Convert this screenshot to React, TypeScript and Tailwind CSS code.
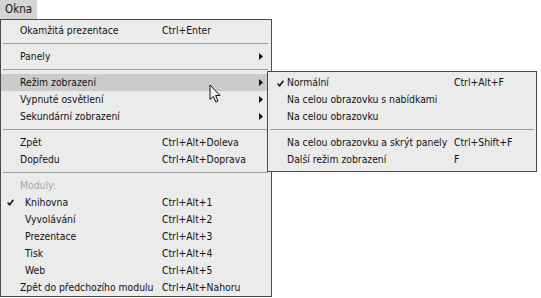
type Item =
  | { sep: true }
  | {
      sep?: false;
      label: string;
      shortcut?: string;
      sub?: boolean;
      active?: boolean;
      disabled?: boolean;
      checked?: boolean;
      indent?: boolean;
    };

const mainItems: Item[] = [
  { label: 'Okamžitá prezentace', shortcut: 'Ctrl+Enter' },
  { sep: true },
  { label: 'Panely', sub: true },
  { sep: true },
  { label: 'Režim zobrazení', sub: true, active: true },
  { label: 'Vypnuté osvětlení', sub: true },
  { label: 'Sekundární zobrazení', sub: true },
  { sep: true },
  { label: 'Zpět', shortcut: 'Ctrl+Alt+Doleva' },
  { label: 'Dopředu', shortcut: 'Ctrl+Alt+Doprava' },
  { sep: true },
  { label: 'Moduly:', disabled: true },
  { label: 'Knihovna', shortcut: 'Ctrl+Alt+1', checked: true, indent: true },
  { label: 'Vyvolávání', shortcut: 'Ctrl+Alt+2', indent: true },
  { label: 'Prezentace', shortcut: 'Ctrl+Alt+3', indent: true },
  { label: 'Tisk', shortcut: 'Ctrl+Alt+4', indent: true },
  { label: 'Web', shortcut: 'Ctrl+Alt+5', indent: true },
  { label: 'Zpět do předchozího modulu', shortcut: 'Ctrl+Alt+Nahoru' },
];

const subItems: Item[] = [
  { label: 'Normální', shortcut: 'Ctrl+Alt+F', checked: true },
  { label: 'Na celou obrazovku s nabídkami' },
  { label: 'Na celou obrazovku' },
  { sep: true },
  { label: 'Na celou obrazovku a skrýt panely', shortcut: 'Ctrl+Shift+F' },
  { label: 'Další režim zobrazení', shortcut: 'F' },
];

function Check({ className }: { className: string }) {
  return (
    <svg width="7" height="7" viewBox="0 0 7 7" className={className}>
      <path d="M0.6 3.6 L2.6 5.8 L6.4 0.8" fill="none" stroke="#111" strokeWidth="1.5" />
    </svg>
  );
}

function Arrow() {
  return (
    <svg width="4" height="7" viewBox="0 0 4 7" className="absolute left-[258px] top-[5px]">
      <polygon points="0,0 4,3.5 0,7" fill="#111" />
    </svg>
  );
}

function MainMenu() {
  return (
    <div className="w-[272px] border border-[#4a4a4a] bg-[#ebebeb] pt-[2px]">
      {mainItems.map((it, i) =>
        it.sep ? (
          <div key={i} className="flex h-[9px] items-center pl-[2px] pr-[3px]">
            <div className="h-[2px] w-full border-t border-[#9c9c9c]" />
          </div>
        ) : (
          <div
            key={i}
            className={`relative flex h-[17px] items-center ${it.active ? 'bg-[#cbcbcb]' : ''} ${
              it.disabled ? 'text-[#a3a3a3]' : 'text-[#111]'
            }`}
          >
            {it.checked && <Check className="absolute left-[6px] top-[5px]" />}
            <span className={`${it.indent ? 'pl-[24px]' : 'pl-[19px]'} w-[161px] shrink-0 whitespace-nowrap`}>
              {it.label}
            </span>
            {it.shortcut && <span className="whitespace-nowrap">{it.shortcut}</span>}
            {it.sub && <Arrow />}
          </div>
        ),
      )}
    </div>
  );
}

function SubMenu() {
  return (
    <div className="absolute left-[267px] top-[71px] w-[270px] border border-[#4a4a4a] bg-[#ebebeb] pb-[3px] pt-[2px]">
      {subItems.map((it, i) =>
        it.sep ? (
          <div key={i} className="flex h-[9px] items-center pl-[2px] pr-[2px]">
            <div className="h-[2px] w-full border-t border-[#9c9c9c]" />
          </div>
        ) : (
          <div key={i} className="relative flex h-[17px] items-center text-[#111]">
            {it.checked && <Check className="absolute left-[9px] top-[6px]" />}
            <span className="w-[186px] shrink-0 whitespace-nowrap pl-[19px]">{it.label}</span>
            {it.shortcut && <span className="whitespace-nowrap">{it.shortcut}</span>}
          </div>
        ),
      )}
    </div>
  );
}

function Cursor() {
  return (
    <svg width="13" height="20" viewBox="0 0 13 20" className="absolute left-[209px] top-[84px]">
      <path
        d="M1 1 L1 15.5 L4.3 12.4 L6.8 18 L9 17 L6.6 11.5 L11 11.5 Z"
        fill="#f4f4f4"
        stroke="#111"
        strokeWidth="1"
        strokeLinejoin="miter"
      />
    </svg>
  );
}

export default function App() {
  return (
    <div className="relative h-[298px] w-[541px] overflow-hidden bg-white font-['DejaVu_Sans_Condensed','Liberation_Sans',sans-serif] text-[10.3px] leading-none">
      <div className="flex h-[19px] w-[37px] items-center bg-[#d4d4d4] pl-[5px] text-[11.5px] text-[#111]">Okna</div>
      <MainMenu />
      <SubMenu />
      <Cursor />
    </div>
  );
}
